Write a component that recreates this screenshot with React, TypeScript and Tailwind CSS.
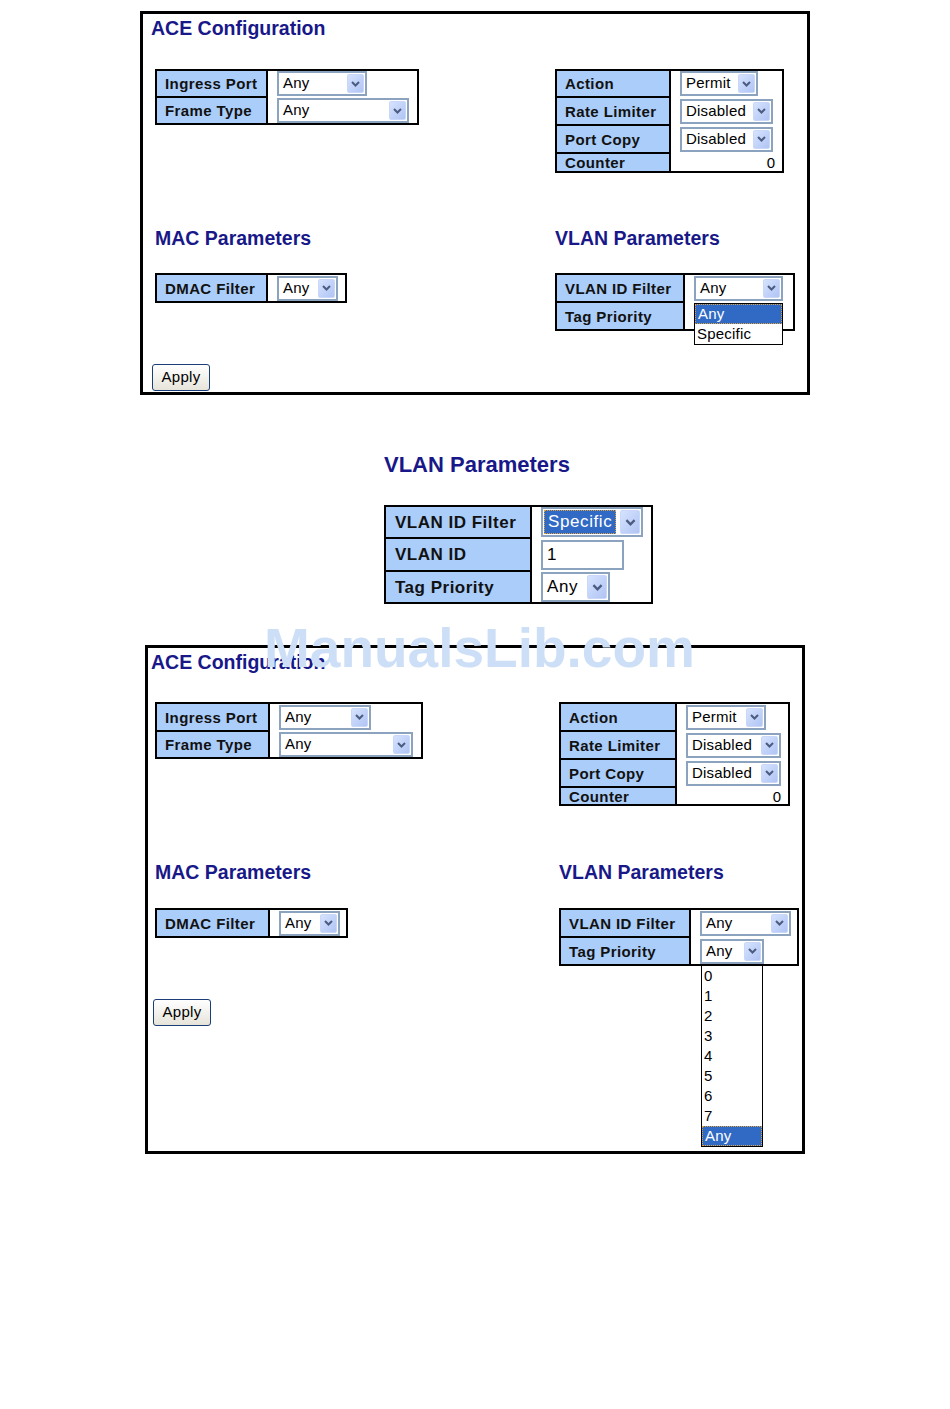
import type { ReactNode } from 'react';
import clsx from 'clsx';

const arial = "font-['Liberation_Sans',Arial,Helvetica,sans-serif]";

const Chevron = ({ big }: { big?: boolean }) => (
  <svg width={big ? 11 : 9} height={big ? 7 : 6} viewBox="0 0 9 6">
    <path d="M1 1l3.5 3.5L8 1" fill="none" stroke="#4b5c80" strokeWidth="2" />
  </svg>
);

type SelectProps = { value: string; w: string; big?: boolean; picked?: boolean; children?: ReactNode };

const Select = ({ value, w, big, picked, children }: SelectProps) => (
  <div
    className={clsx(
      'relative flex shrink-0 items-center border-2 border-[#8ca3bf] bg-white',
      w,
      big ? 'h-[30px]' : 'h-[25px]',
    )}
  >
    <span
      className={clsx(
        'whitespace-nowrap',
        big ? 'text-[17px] tracking-[0.6px]' : 'pl-[4px] text-[15px] tracking-[0.2px]',
        big && !picked && 'pl-[4px]',
        picked && 'ml-[1px] flex h-[24px] items-center border border-dotted border-[#e2a23c] bg-[#316ac5] px-[3px] text-white',
      )}
    >
      {value}
    </span>
    <span
      className={clsx(
        'ml-auto mr-[1px] flex items-center justify-center rounded-[2px] border border-[#c9d8fa] bg-gradient-to-br from-[#d6e3fe] to-[#b0c4f4]',
        big ? 'h-[24px] w-[20px]' : 'h-[19px] w-[17px]',
      )}
    >
      <Chevron big={big} />
    </span>
    {children}
  </div>
);

const ListBox = ({ items, active, className }: { items: string[]; active: string; className: string }) => (
  <div className={clsx('absolute z-10 border border-black bg-white', className)}>
    {items.map((it) => (
      <div
        key={it}
        className={clsx(
          'h-[20px] whitespace-nowrap pl-[2px] text-[15px] tracking-[0.2px]',
          it === active
            ? 'border border-dotted border-[#e2a23c] bg-[#316ac5] pl-[1px] leading-[18px] text-white'
            : 'leading-[20px]',
        )}
      >
        {it}
      </div>
    ))}
  </div>
);

type Row = { label: string; h: string; content?: ReactNode; right?: boolean };

const ParamTable = ({ w, lw, rows, big }: { w: string; lw: string; rows: Row[]; big?: boolean }) => (
  <div className={clsx('shrink-0 border-2 border-black bg-white', w)}>
    {rows.map((r, i) => (
      <div key={r.label} className={clsx('flex', r.h)}>
        <div
          className={clsx(
            'flex shrink-0 items-center whitespace-nowrap border-black bg-[#abcdf9] font-bold leading-none text-[#111]',
            lw,
            i > 0 ? 'border-r-2 border-t-2' : 'border-r-2',
            big ? 'pl-[9px] text-[17px] tracking-[0.5px]' : 'pl-[8px] text-[15px] tracking-[0.4px]',
          )}
        >
          {r.label}
        </div>
        <div
          className={clsx(
            'flex flex-1 items-center',
            i > 0 && 'pt-[2px]',
            r.right ? 'justify-end pr-[7px] text-[15px] leading-none' : 'pl-[9px]',
          )}
        >
          {r.content}
        </div>
      </div>
    ))}
  </div>
);

const Heading = ({ children, className }: { children: ReactNode; className?: string }) => (
  <div className={clsx('h-[22px] whitespace-nowrap text-[19.5px] font-bold leading-[22px] text-[#181889]', className)}>
    {children}
  </div>
);

const Apply = ({ className }: { className: string }) => (
  <button
    className={clsx(
      'h-[27px] w-[58px] self-start rounded-[3px] border border-[#1c3e78] bg-gradient-to-b from-white to-[#e6e4da] text-[15px] tracking-[0.3px] text-black',
      className,
    )}
  >
    Apply
  </button>
);

const Panel = ({ first }: { first?: boolean }) => {
  const f = first;
  const leftCol = clsx('shrink-0', f ? 'w-[412px] pl-[12px]' : 'w-[411px] pl-[7px]');

  return (
    <div
      className={clsx(
        'flex flex-col border-[3px] border-black',
        f ? 'ml-[140px] mt-[11px] h-[384px] w-[670px]' : 'ml-[145px] mt-[41px] h-[509px] w-[660px]',
      )}
    >
      <Heading className={clsx('mt-[3px]', f ? 'pl-[8px]' : 'pl-[3px]')}>ACE Configuration</Heading>

      <div className={clsx('flex items-start', f ? 'mt-[30px]' : 'mt-[29px]')}>
        <div className={leftCol}>
          <ParamTable
            w={f ? 'w-[264px]' : 'w-[268px]'}
            lw={f ? 'w-[111px]' : 'w-[113px]'}
            rows={[
              { label: 'Ingress Port', h: f ? 'h-[25px]' : 'h-[26px]', content: <Select value="Any" w={f ? 'w-[90px]' : 'w-[92px]'} /> },
              { label: 'Frame Type', h: 'h-[27px]', content: <Select value="Any" w={f ? 'w-[132px]' : 'w-[134px]'} /> },
            ]}
          />
        </div>
        <ParamTable
          w={f ? 'w-[229px]' : 'w-[231px]'}
          lw={f ? 'w-[114px]' : 'w-[116px]'}
          rows={[
            { label: 'Action', h: f ? 'h-[25px]' : 'h-[26px]', content: <Select value="Permit" w={f ? 'w-[78px]' : 'w-[80px]'} /> },
            { label: 'Rate Limiter', h: 'h-[28px]', content: <Select value="Disabled" w={f ? 'w-[93px]' : 'w-[95px]'} /> },
            { label: 'Port Copy', h: 'h-[28px]', content: <Select value="Disabled" w={f ? 'w-[93px]' : 'w-[95px]'} /> },
            { label: 'Counter', h: f ? 'h-[19px]' : 'h-[18px]', content: '0', right: true },
          ]}
        />
      </div>

      <div className={clsx('flex', f ? 'mt-[54px]' : 'mt-[55px]')}>
        <div className={leftCol}>
          <Heading>MAC Parameters</Heading>
        </div>
        <Heading>VLAN Parameters</Heading>
      </div>

      <div className={clsx('flex items-start', f ? 'mt-[24px]' : 'mt-[25px]')}>
        <div className={leftCol}>
          <ParamTable
            w={f ? 'w-[192px]' : 'w-[193px]'}
            lw={f ? 'w-[111px]' : 'w-[113px]'}
            rows={[{ label: 'DMAC Filter', h: 'h-[26px]', content: <Select value="Any" w="w-[61px]" /> }]}
          />
        </div>
        <ParamTable
          w="w-[240px]"
          lw={f ? 'w-[128px]' : 'w-[130px]'}
          rows={[
            {
              label: 'VLAN ID Filter',
              h: 'h-[26px]',
              content: (
                <Select value="Any" w={f ? 'w-[89px]' : 'w-[91px]'}>
                  {f && <ListBox items={['Any', 'Specific']} active="Any" className="-left-[2px] top-[25px] w-[89px]" />}
                </Select>
              ),
            },
            {
              label: 'Tag Priority',
              h: 'h-[28px]',
              content: (
                <Select value="Any" w={f ? 'w-[66px]' : 'w-[64px]'}>
                  {!f && (
                    <ListBox
                      items={['0', '1', '2', '3', '4', '5', '6', '7', 'Any']}
                      active="Any"
                      className="-left-[1px] top-[24px] w-[62px]"
                    />
                  )}
                </Select>
              ),
            },
          ]}
        />
      </div>

      <Apply className={clsx('mt-[33px]', f ? 'ml-[9px]' : 'ml-[5px]')} />
    </div>
  );
};

export default function App() {
  return (
    <div className={clsx('relative min-h-[1409px] w-[950px] overflow-hidden bg-white text-black', arial)}>
      <Panel first />

      <div className="ml-[384px] mt-[57px] h-[26px] whitespace-nowrap text-[22px] font-bold leading-[26px] text-[#181889]">
        VLAN Parameters
      </div>
      <div className="ml-[384px] mt-[27px]">
        <ParamTable
          big
          w="w-[269px]"
          lw="w-[146px]"
          rows={[
            { label: 'VLAN ID Filter', h: 'h-[30px]', content: <Select big picked value="Specific" w="w-[102px]" /> },
            {
              label: 'VLAN ID',
              h: 'h-[33px]',
              content: (
                <div className="flex h-[30px] w-[83px] items-center border-2 border-[#8ca3bf] bg-white pl-[4px] text-[17px]">1</div>
              ),
            },
            { label: 'Tag Priority', h: 'h-[32px]', content: <Select big value="Any" w="w-[69px]" /> },
          ]}
        />
      </div>

      <Panel />

      <div className="pointer-events-none absolute left-[264px] top-[621px] z-20 whitespace-nowrap text-[55px] font-bold leading-[55px] text-[#cddff7]">
        ManualsLib.com
      </div>
    </div>
  );
}
